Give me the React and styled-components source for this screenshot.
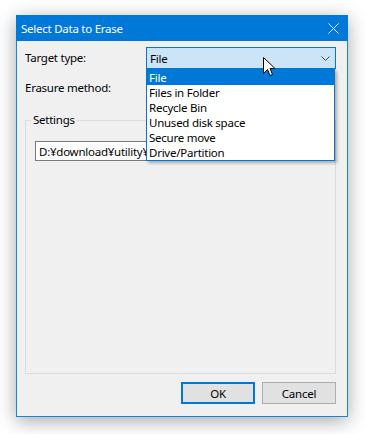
import React from "react";
import styled, { createGlobalStyle } from "styled-components";

const Global = createGlobalStyle`
  html, body { margin: 0; padding: 0; background: #ffffff; }
  body {
    font-family: "Noto Sans", "Open Sans", sans-serif;
    font-size: 11.5px;
    letter-spacing: -0.25px;
    color: #000;
  }
  * { box-sizing: border-box; }
`;

const Page = styled.div`
  padding: 15px 0 0 16px;
  width: 366px;
  height: 434px;
`;

const Window = styled.div`
  width: 332px;
  height: 402px;
  border: 1px solid #1883d7;
  background: #f0f0f0;
  box-shadow: 0 4px 18px rgba(0, 0, 0, 0.35);
  display: flex;
  flex-direction: column;
`;

const TitleBar = styled.div`
  height: 26px;
  margin: -1px -1px 0;
  background: #0078d7;
  color: #fff;
  display: flex;
  align-items: center;
  justify-content: space-between;
  padding: 0 9px 0 5px;
`;

const Body = styled.div`
  position: relative;
  flex: 1;
  display: flex;
  flex-direction: column;
  padding: 6px 11px 12px 8px;
`;

const FormRow = styled.div`
  display: grid;
  grid-template-columns: 121px 1fr;
  align-items: center;
  height: 22px;
  margin-bottom: ${(p) => p.$gap || 0}px;
`;

const Label = styled.span`
  line-height: 14px;
`;

const Combo = styled.div`
  height: 22px;
  border: 1px solid #0078d7;
  background: #cce4f7;
  display: flex;
  align-items: center;
  justify-content: space-between;
  padding: 0 5px 0 3px;
`;

const Group = styled.fieldset`
  flex: 1;
  margin: 0 0 8px;
  border: 1px solid #dcdcdc;
  padding: 14px 9px 0 9px;
  min-width: 0;
`;

const Legend = styled.legend`
  padding: 0 2px;
  margin-left: -4px;
  line-height: 14px;
`;

const TextBox = styled.div`
  height: 20px;
  width: 111px;
  border: 1px solid #7a7a7a;
  border-right: none;
  background: #fff;
  padding: 0 3px;
  display: flex;
  align-items: center;
  white-space: nowrap;
  overflow: hidden;
`;

const Buttons = styled.div`
  display: flex;
  justify-content: flex-end;
  gap: 7px;
`;

const Button = styled.div`
  width: 74px;
  height: 22px;
  background: #e1e1e1;
  border: ${(p) => (p.$default ? "2px solid #0078d7" : "1px solid #adadad")};
  display: flex;
  align-items: center;
  justify-content: center;
`;

const DropList = styled.div`
  position: absolute;
  left: 129px;
  top: 28px;
  width: 189px;
  border: 1px solid #0078d7;
  background: #fff;
  box-shadow: 2px 2px 3px rgba(0, 0, 0, 0.3);
  z-index: 2;
`;

const Item = styled.div`
  height: 15px;
  line-height: 15px;
  padding-left: 2px;
  background: ${(p) => (p.$selected ? "#0078d7" : "transparent")};
  color: ${(p) => (p.$selected ? "#fff" : "#000")};
`;

const Cursor = styled.svg`
  position: absolute;
  left: 246px;
  top: 16px;
  z-index: 3;
`;

const items = [
  "File",
  "Files in Folder",
  "Recycle Bin",
  "Unused disk space",
  "Secure move",
  "Drive/Partition",
];

export default function App() {
  return (
    <Page>
      <Global />
      <Window>
        <TitleBar>
          <span>Select Data to Erase</span>
          <svg width="11" height="11" viewBox="0 0 11 11">
            <path d="M0.5 0.5 L10.5 10.5 M10.5 0.5 L0.5 10.5" stroke="#fff" strokeWidth="1" />
          </svg>
        </TitleBar>
        <Body>
          <FormRow $gap={8}>
            <Label>Target type:</Label>
            <Combo>
              <span>File</span>
              <svg width="9" height="5" viewBox="0 0 9 5">
                <path d="M0.5 0.5 L4.5 4.5 L8.5 0.5" stroke="#444" fill="none" strokeWidth="1" />
              </svg>
            </Combo>
          </FormRow>
          <FormRow $gap={14}>
            <Label>Erasure method:</Label>
          </FormRow>
          <Group>
            <Legend>Settings</Legend>
            <TextBox>D:¥download¥utility¥</TextBox>
          </Group>
          <Buttons>
            <Button $default>OK</Button>
            <Button>Cancel</Button>
          </Buttons>
          <DropList>
            {items.map((t, i) => (
              <Item key={t} $selected={i === 0}>{t}</Item>
            ))}
          </DropList>
          <Cursor width="13" height="20" viewBox="0 0 13 20">
            <path
              d="M0.5 0.5 L0.5 16.5 L4.5 12.5 L7 18.5 L9.5 17.5 L7 11.5 L12 11.5 Z"
              fill="#fff"
              stroke="#000"
              strokeWidth="1"
            />
          </Cursor>
        </Body>
      </Window>
    </Page>
  );
}
